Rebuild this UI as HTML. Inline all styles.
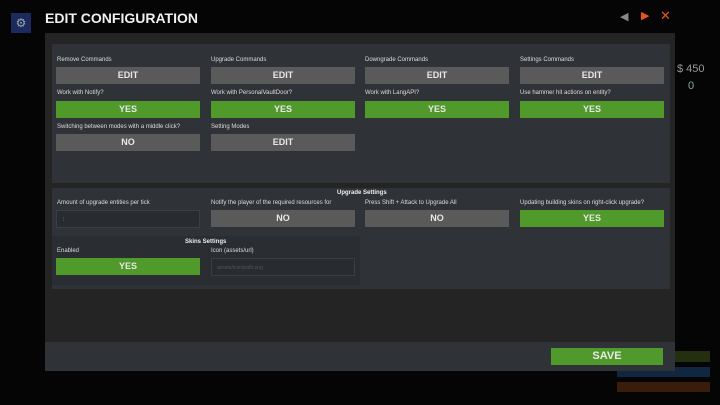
<!DOCTYPE html>
<html><head><meta charset="utf-8"><style>
*{margin:0;padding:0;box-sizing:border-box}
body{width:720px;height:405px;background:#050505;position:relative;overflow:hidden;font-family:"Liberation Sans",sans-serif;color:#e6e6e6}
.a{position:absolute}
.lbl{position:absolute;font-size:6px;color:#dcdcdc;white-space:nowrap}
.btn{position:absolute;width:144px;height:17px;font-size:9px;font-weight:bold;color:#e8e8e8;text-align:center;line-height:17px}
.g{background:#5a5a5a}
.y{background:#4f9a2b}
.inp{position:absolute;width:144px;height:18px;background:#282b2f;border:1px solid #3b3e43;font-size:5px;color:#555;padding:6px 5px}
</style></head><body>
<div class="a" style="left:11px;top:13px;width:20px;height:20px;background:#1d2a5e;color:#9aa;font-size:12px;text-align:center;line-height:20px">⚙</div>
<div class="a" style="left:45px;top:10px;font-size:14px;font-weight:bold;color:#f0f0f0">EDIT CONFIGURATION</div>
<div class="a" style="left:620px;top:10px;color:#888;font-size:11px">◀</div>
<div class="a" style="left:641px;top:9px;color:#e8541e;font-size:11px">▶</div>
<div class="a" style="left:660px;top:8px;color:#e8541e;font-size:13px">✕</div>
<div class="a" style="left:677px;top:63px;color:#999;font-size:11px">$ 450</div>
<div class="a" style="left:688px;top:80px;color:#8aa;font-size:11px">0</div>
<div class="a" style="left:675px;top:351px;width:35px;height:11px;background:#22300f"></div>
<div class="a" style="left:617px;top:367px;width:93px;height:10px;background:#0f2740"></div>
<div class="a" style="left:617px;top:382px;width:93px;height:10px;background:#3a1c0a"></div>
<div class="a" style="left:45px;top:33px;width:630px;height:338px;background:#242424"></div>
<div class="a" style="left:52px;top:44px;width:618px;height:139px;background:#2f3237"></div>
<div class="a" style="left:52px;top:188px;width:618px;height:101px;background:#2f3237"></div>
<div class="a" style="left:52px;top:236px;width:308px;height:49px;background:#2a2d31"></div>
<div class="a" style="left:45px;top:342px;width:630px;height:29px;background:#2f3237"></div>

<div class="lbl" style="left:57px;top:57px">Remove Commands</div>
<div class="lbl" style="left:211px;top:57px">Upgrade Commands</div>
<div class="lbl" style="left:365px;top:57px">Downgrade Commands</div>
<div class="lbl" style="left:520px;top:57px">Settings Commands</div>
<div class="btn g" style="left:56px;top:67px">EDIT</div>
<div class="btn g" style="left:211px;top:67px">EDIT</div>
<div class="btn g" style="left:365px;top:67px">EDIT</div>
<div class="btn g" style="left:520px;top:67px">EDIT</div>

<div class="lbl" style="left:57px;top:90px">Work with Notify?</div>
<div class="lbl" style="left:211px;top:90px">Work with PersonalVaultDoor?</div>
<div class="lbl" style="left:365px;top:90px">Work with LangAPI?</div>
<div class="lbl" style="left:520px;top:90px">Use hammer hit actions on entity?</div>
<div class="btn y" style="left:56px;top:101px">YES</div>
<div class="btn y" style="left:211px;top:101px">YES</div>
<div class="btn y" style="left:365px;top:101px">YES</div>
<div class="btn y" style="left:520px;top:101px">YES</div>

<div class="lbl" style="left:57px;top:124px">Switching between modes with a middle click?</div>
<div class="lbl" style="left:211px;top:124px">Setting Modes</div>
<div class="btn g" style="left:56px;top:134px">NO</div>
<div class="btn g" style="left:211px;top:134px">EDIT</div>

<div class="lbl" style="left:337px;top:190px;font-weight:bold;color:#eee">Upgrade Settings</div>
<div class="lbl" style="left:57px;top:200px">Amount of upgrade entities per tick</div>
<div class="lbl" style="left:211px;top:200px">Notify the player of the required resources for</div>
<div class="lbl" style="left:365px;top:200px">Press Shift + Attack to Upgrade All</div>
<div class="lbl" style="left:520px;top:200px">Updating building skins on right-click upgrade?</div>
<div class="inp" style="left:56px;top:210px">1</div>
<div class="btn g" style="left:211px;top:210px">NO</div>
<div class="btn g" style="left:365px;top:210px">NO</div>
<div class="btn y" style="left:520px;top:210px">YES</div>

<div class="lbl" style="left:185px;top:239px;font-weight:bold;color:#eee">Skins Settings</div>
<div class="lbl" style="left:57px;top:248px">Enabled</div>
<div class="lbl" style="left:211px;top:248px">Icon (assets/url)</div>
<div class="btn y" style="left:56px;top:258px">YES</div>
<div class="inp" style="left:211px;top:258px">assets/icon/path.png</div>

<div class="btn y" style="left:551px;top:348px;width:112px;height:17px;font-size:11px">SAVE</div>
</body></html>
